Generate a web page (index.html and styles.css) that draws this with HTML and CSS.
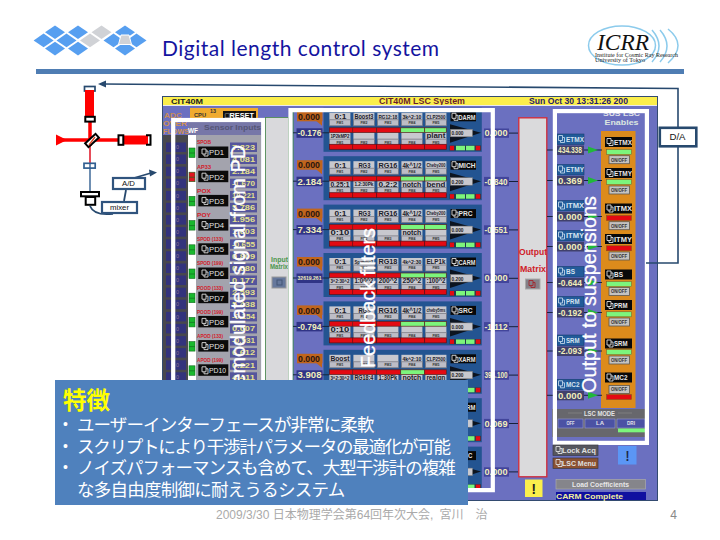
FILE: index.html
```
<!DOCTYPE html>
<html lang="ja">
<head>
<meta charset="utf-8">
<title>Digital length control system</title>
<link rel="stylesheet" href="styles.css">
</head>
<body>
<main class="slide">
  <header class="header">
    <svg class="emblem" viewBox="32 24 120 34" width="120" height="34" id="emblem"></svg>
    <h1 class="title">Digital length control system</h1>
    <svg class="icrr" viewBox="585 22 100 46" width="100" height="46">
      <g fill="none" stroke="#8ccbec" stroke-width="1.5">
        <ellipse cx="622" cy="45.500" rx="33.500" ry="19.5"/>
        <path d="M652 30q14 16 0 32M660 30q14 16 0 32M668 29q20 16 0 34"/>
      </g>
      <text class="icrr-name" x="597" y="50" textLength="52" lengthAdjust="spacingAndGlyphs">ICRR</text>
      <text class="icrr-sub" x="595" y="56.5" textLength="83" lengthAdjust="spacingAndGlyphs">Institute for Cosmic Ray Research</text>
      <text class="icrr-sub" x="595" y="62" textLength="50" lengthAdjust="spacingAndGlyphs">University of Tokyo</text>
    </svg>
  </header>
  <div class="rule"></div>
  <svg class="diagram" id="diagram" viewBox="0 76 720 428" width="720" height="428"></svg>
  <section class="features">
    <h2>特徴</h2>
    <ul>
      <li class="a">ユーザーインターフェースが非常に柔軟</li>
      <li class="b">スクリプトにより干渉計パラメータの最適化が可能</li>
      <li class="c">ノイズパフォーマンスも含めて、大型干渉計の複雑<br><span class="d">な多自由度制御に耐えうるシステム</span></li>
    </ul>
  </section>
  <footer class="footer"><span class="event">2009/3/30 日本物理学会第64回年次大会,&ensp;宮川　治</span><span class="page">4</span></footer>
</main>
<script src="diagram.js"></script>
</body>
</html>
```
FILE: styles.css
```
* { box-sizing: border-box; }
body { margin: 0; background: #fff; font-family: "Liberation Sans", "Noto Sans CJK JP", sans-serif; }
.slide { position: relative; width: 720px; height: 540px; overflow: hidden; display: flex; flex-direction: column; }
.header { height: 69px; padding: 22px 35px 0 32px; display: flex; align-items: flex-start; }
.emblem { margin-top: 2px; flex: none; }
.title { margin: 13px auto 0 10px; font: 400 21px/26px Lato, sans-serif; letter-spacing: .5px; color: #1414a0; white-space: nowrap; }
.icrr { flex: none; }
.icrr-name { font: italic 24px "Liberation Serif", serif; fill: #111; }
.icrr-sub { font: 6px "Liberation Serif", serif; fill: #222; }
.rule { height: 5px; margin: 0 36px 2px 36px; background: #4f7db3; flex: none; }
.diagram { display: block; flex: none; }
.diagram text { font-family: "Liberation Sans", sans-serif; }
.features { position: absolute; left: 55px; top: 380px; width: 413px; height: 125px; padding: 5px 8px; background: #4f81bd; color: #fff; }
.features h2 { margin: 0; font: 700 23.5px/28px "Noto Sans CJK JP", sans-serif; color: #ff0; }
.features ul { margin: 0; padding: 0; list-style: none; font: 400 17.5px/21.7px "Noto Sans CJK JP", sans-serif; white-space: nowrap; }
.features li { padding-left: 14px; }
.features li::before { content: "•"; float: left; width: 14px; margin-left: -14px; font: 14px/23px "Liberation Sans", sans-serif; }
.a { letter-spacing: -.9px; }
.b { letter-spacing: -1.25px; }
.c { letter-spacing: -1px; }
.d { letter-spacing: -.75px; }
.footer { display: flex; justify-content: space-between; padding: 1px 43px 0 216px; font-size: 12px; line-height: 20px; color: #aaa; white-space: nowrap; }
.page { color: #888; }
```
FILE: diagram.js
```
const out = [];
const rect = (x, y, w, h, fill, extra = "") => out.push(`<rect x="${x}" y="${y}" width="${w}" height="${h}" fill="${fill}" ${extra}/>`);
const path = (d, fill, stroke = "none", w = 1) => out.push(`<path d="${d}" fill="${fill}" stroke="${stroke}" stroke-width="${w}"/>`);
// Text centred on cy, starting at x, squeezed or stretched to the width w.
const text = (s, x, cy, w, size, fill, weight = 700) =>
  out.push(`<text x="${x}" y="${cy + size * 0.36}" font-size="${size}" font-weight="${weight}" fill="${fill}" textLength="${w}" lengthAdjust="spacingAndGlyphs">${s}</text>`);
const linkIcon = (x, cy, c = "#ddd") => path(`M${x} ${cy - 3}h4v5h-4zM${x + 2} ${cy + 2}v2h4v-5h-2`, "none", c, .9);
const frame = (x, y, w, h) => rect(x, y, w, h, "none", 'stroke="#fff" stroke-width="4.2"');
const vertical = (s, x, y, len) =>
  out.push(`<text transform="translate(${x} ${y}) rotate(-90)" font-size="20" fill="#fff" stroke="#fff" stroke-width=".3" textLength="${len}" lengthAdjust="spacingAndGlyphs">${s}</text>`);
const navy = "#27496e", lime = "#7cf57c", red = "#e30a12";

// Panel
rect(162.5, 96.5, 495, 404, "#6b70c0", 'stroke="#334b70"');
rect(163, 97, 494, 8, "#fbee4c");
text("CIT40M", 171, 101, 32, 8, "#222");
text("CIT40M LSC System", 379, 101, 86, 8.5, "#6b1d2c");
text("Sun Oct 30 13:31:26 200", 529, 101, 99, 8.5, "#26206a");
path("M163 105.5H657", "none", "#e8e8f0", 1);

// Sensor inputs
rect(163, 135, 25, 250, "#48484e");
rect(188, 135, 8, 250, "#fff");
rect(196, 135, 65, 250, "#a3a3ad");
rect(188, 122, 73, 13, "#7777a8");
rect(190, 108, 68, 10, "#f0ab30");
text("CPU", 194, 115, 12, 6, "#333");
text("13", 210, 111.5, 6, 5, "#333");
rect(223, 111, 33, 8, "#111");
text("□RESET", 225, 115.5, 29, 7, "#fff");
text("ADC", 164, 115, 18, 8, "#c98b58");
text("OVER", 163, 123.5, 24, 8, "#d09050");
text("FLOWS", 163, 131.5, 26, 8, "#d09050");
text("WF", 188, 130, 10, 7, "#fff");
text("Sensor Inputs", 204, 127.5, 57, 7.5, "#555575");
const pds = [["SPOB", "7.323", "4.081"], ["AP33", "2.184", "-1.670"], ["POX", "10.221", "5.786"], ["POY", "1.956", "1.603"],
  ["SPOD (133)", "-0.655", "0.809"], ["SPOD (199)", "0.080", "0.177"], ["POOD (133)", "2.593", "5.438"],
  ["POOD (199)", "-0.154", "0.007"], ["APOD (133)", "-0.931", "6.612"], ["APOD (199)", "0.221", "4.411"]];
pds.forEach(([label, a, b], i) => {
  const y = 152.5 + i * 24.2;
  text(label, 197, y - 10, label.length > 4 ? 26 : 14, 5, "#d31b2b");
  rect(198.3, y - 6, 30, 11.5, "#0b0b0b");
  linkIcon(202, y - .5);
  text("PD" + (i + 1), 209, y, i === 9 ? 17 : 15, 8, "#e4e4e4", 400);
  rect(189, y - 4.5, 6, 9.5, i === 1 ? "#e01520" : "#19b82e", 'stroke="#176b22" stroke-width=".6"');
  path(`M189 ${y + .5}h6`, "none", "#176b22", .7);
  [[a, -5.5], [b, 6.5]].forEach(([v, d]) => {
    rect(230, y + d - 4.5, 27, 9.5, "#55559c");
    text(v, 232, y + d, 23, 8, "#e4e08c");
    rect(166, y + d - 4.5, 20, 9.5, "#33337c");
    text("0", 176, y + d, 3, 6, "#8d7490", 400);
  });
});
frame(173.2, 120, 90, 285);

// Input matrix
rect(265.5, 117.5, 23, 268, "#d9d9dc", 'stroke="#4a8b4a" stroke-width=".8"');
text("Input", 271, 260, 17, 6.5, "#4c964c");
text("Matrix", 270, 267, 18, 6.5, "#4c964c");
rect(272, 277, 14, 11, "#66789c", 'stroke="#999"');
rect(277, 280, 5, 5, "none", 'stroke="#435475"');
path("M293 112V488", "none", "#389438", 1);

// Feedback filter banks
const banks = [
  ["DARM", "-0.176", "0.000", ["0:1", "Boost3", "RG12:18", "3k^2:10", "CLP2500"], ["1P2kMP2", "", "", "", "plant"]],
  ["MICH", "2.184", "-0.840", ["0:1", "RG3", "RG16", "4k^1/2", "Cheby200"], ["0.25:1", "1.2:30Pk", "0.2:2", "notch", "bend"]],
  ["PRC", "7.334", "-0.551", ["0:1", "RG3", "RG16", "4k^1/2", "Cheby200"], ["0:10", "", "", "notch", ""]],
  ["CARM", "32619.261", "0.000", ["0:1", "Sp:mov:1", "RG18", "4k^2:30", "ELP1k"], ["3^2:30^2", "1:00^2", "200^2", "250^2", ":100^2"]],
  ["SRC", "-0.794", "-1.112", ["0:1", "RG3", "RG16", "4k^1/2", "cheby5ms"], ["0:10", "", "", "", ""]],
  ["XARM", "3.908", "394.100", ["Boost", "", "", "4k^2:10", "CLP2500"], ["3^2:30^2", "RG18:4", "1:30Pk", "notch", "realgn"]],
  ["YARM", "", "0.069"],
  ["MC", "", "0.000"]];
banks.forEach(([name, inp, res, top, low], i) => {
  const y = 107.8 + i * 48.4;
  rect(323.5, y, 158.3, 44, "#235491");
  if (top) {
    rect(297, y + 4, 25.5, 9.5, "#c0651c");
    path(`M316 ${y + 13}h6v5z`, "#c0651c");
    text("0.000", 298, y + 9, 22, 9, "#2a1510");
    path(`M293 ${y + 25}h36`, "none", "#15253d", 1);
    rect(296.5, y + 20.5, 26, 9.5, "#303486");
    text(inp, 297.5, y + 25.3, 24, inp.length > 7 ? 6 : 9, "#f1eebc");
  }
  for (let k = 0; top && k < 5; k++) {
    const x = 329.4 + k * 24;
    [[top[k], 5, 4], [low[k], 24.3, 3.8]].forEach(([s, d, c]) => {
      rect(x, y + d, 21, 8, "#c8c8ce");
      if (s) text(s, x + (s.length < 4 ? 5 : 1), y + d + c, s.length < 4 ? 12 : 19, s.length > 6 ? 5 : 6.6, "#20202a");
      rect(x, y + d + 7, 21, 6, "#bdbdc6", 'stroke="#74747e" stroke-width=".7"');
      if (i < 5 || d < 20) text("FM" + (k + 1), x + 7, y + d + 10, 7, 4, "#333");
    });
    const on = k === 3 || (k === 4 && i !== 5);
    rect(x - (k ? .7 : 0), y + 20, k === 4 ? 21.6 : 24, 4.8, on ? lime : red, 'stroke="#5c2222" stroke-width=".7"');
    rect(x - (k ? .7 : 0), y + 36.5, k === 4 ? 21.6 : 24, 5, red, 'stroke="#5c1018" stroke-width=".7"');
  }
  path(`M450 ${y + 16.5}L481 ${y + 25}L450 ${y + 35}z`, "#0c1420");
  rect(450.5, y + 21.5, 22, 7.5, "#c8c8ce", 'stroke="#777" stroke-width=".5"');
  if (top) text(i % 2 ? "0.200" : "0.000", 451.5, y + 25.7, 12, 5, "#222");
  rect(450.5, y + 4.5, 25.5, 9, "#080808");
  linkIcon(452, y + 8.5);
  text(name, name === "MC" ? 463 : 458.5, y + 9, Math.min(17, name.length * 4.7), 7.5, "#e4e4e4");
  rect(449.5, y + 37.7, 31.5, 5, "#24384a");
  [[450, 4, red], [456, 9, lime], [466, 8.5, lime], [475.8, 4.5, red]].forEach(([x, w, c]) => rect(x, y + 38, w, 4.5, c));
  rect(484, y + 20.7, 25, 9.3, "#42459b");
  text(res, 484.5, y + 25.3, 23, 8.5, "#f1eebc");
  path(`M509 ${y + 25.3}h9`, "none", "#15203a", 1);
});
path("M290.5 110.2H492.8V490.2H290.5z", "none", "#fff", 4.2);

// Output matrix
rect(518.8, 117.8, 28, 359, "#dadadc", 'stroke="#cf3040" stroke-width="1.4"');
text("Output", 519, 252, 28, 8.5, "#cf2028");
text("Matrix", 520, 269, 26, 8.5, "#cf2028");
rect(525.5, 279, 14.5, 10, "#858088", 'stroke="#aaa"');
linkIcon(529, 283.5, "#a3262e");
rect(525, 479.5, 17.5, 17.5, "#fbef4c");
text("!", 531.5, 488.5, 4.5, 14, "#222");

// Suspension outputs
rect(601, 131, 34.5, 277, "#dc8b1c");
text("SUS LSC", 603, 113.5, 37, 8, "#e0e2e8");
text("Enables", 604.5, 122, 34, 8, "#dce6e0");
const sus = [["ETMX", "434.338", 150, 142, 152, 159.7, 1], ["ETMY", "0.369", 180.5, 173, 182, 190, 1], ["ITMX", "0.000", 216.5, 208.5, 218, 225.7, 0],
  ["ITMY", "0.000", 246.5, 239, 248.3, 256, 0], ["BS", "-0.644", 282.5, 274.5, 284, 291.5, 1], ["PRM", "-0.192", 312.5, 305, 314.3, 322, 1],
  ["SRM", "-2.093", 351, 343.5, 352.2, 360, 1], ["MC2", "0.000", 395.3, 377.5, 397, 389.5, 0]];
sus.forEach(([name, v, y, ly, by, ky, on]) => {
  path(`M547 ${y}H602`, "none", "#172440", 1);
  rect(557, y - 16, 27, 10.5, "#225b99", 'stroke="#173e70" stroke-width=".6"');
  linkIcon(558.5, y - 11.5, "#bcd4e8");
  text(name, 566, y - 11, name.length * 4.5, 7.5, "#d4e4f0");
  rect(557, y - 4.5, 27, 9.5, "#40406c");
  text(v, 558, y + .3, 24, 8.5, "#f0edba");
  path(`M588 ${y - 3.5}l10 3.5l-10 3.5z`, "#20b83a");
  rect(605, ly - 5, 27, 10, "#090909");
  linkIcon(607, ly - .5);
  text(name, 614, ly, name.length * 4.5, 8, "#e8e8e8");
  rect(606.5, by - 2.5, 25, 5, on ? lime : red, 'stroke="#765522" stroke-width=".5"');
  rect(609, ky - 4, 20.5, 8, "#c4c2c0", 'stroke="#5d5750" stroke-width=".8"');
  text("ON/OFF", 611, ky, 16, 5, "#333");
});
rect(552, 409, 97, 28, "#67676c");
path("M568 413h14M618 413h14", "none", "#888", .7);
text("LSC MODE", 584, 413, 31, 7, "#e4e4e4");
[[558, 25, "OFF"], [585, 30, "LA"], [617, 28, "DRI"]].forEach(([x, w, s]) => {
  rect(x, 419, w, 9, "#4b52a4", 'stroke="#8d91cc" stroke-width=".7"');
  text(s, x + w / 2 - 4, 423.5, 8, 5, "#e0e0e8");
});
rect(618, 428.5, 27, 3.8, lime);
frame(554.9, 111.1, 92, 331.8);
[[445, "#56565e", "Lock Acq"], [458, "#8a5132", "LSC Menu"]].forEach(([y, c, s]) => {
  rect(553, y, 45, 10.5, c, 'stroke="#3b3b46" stroke-width=".7"');
  linkIcon(556, y + 4.5);
  text(s, 562, y + 5.2, 34, 8, "#e0e0e0");
});
rect(618, 446, 18.5, 18.5, "#5b96f5");
text("!", 625.5, 455.5, 4, 14, "#1c2a4d");
rect(556, 479.5, 89.5, 9.5, "#85858b", 'stroke="#aaa" stroke-width=".7"');
text("Load Coefficients", 572, 484.2, 57, 7.5, "#e8e8e8");
rect(556, 492, 90, 8, "#1010a0");
text("CARM Complete", 556, 496.3, 67, 8, "#f0eda0");

vertical("Demodulated signal from PD", 245, 399, 254);
vertical("Feedback filters", 375, 368, 140);
vertical("Output to suspensions", 596, 393, 197);

// Interferometer
path("M90 121V146", "none", "#f00", 3.5);
path("M90 140V165", "none", "#e02030", 1.6);
path("M60 140H118", "none", "#f00", 3.3);
path("M56 134.5L67 140L56 145.5z", "#f00");
rect(84.5, 86.5, 10.5, 4.5, "#fff", `stroke="${navy}" stroke-width="1.7"`);
rect(85, 90, 9, 26, "#f00");
rect(85.3, 116.8, 9.5, 4.8, "#fff", 'stroke="#000" stroke-width="2"');
rect(124, 135.5, 24, 9, "#f00");
rect(118.5, 135.3, 4.8, 9.5, "#fff", 'stroke="#000" stroke-width="2"');
path("M146 135.3h4.5v9.5h-4.5", "none", "#000", 2);
rect(85, 138, 14, 5, "#fff", 'stroke="#000" stroke-width="2" transform="rotate(-42 92 140.5)"');
path("M89 145L95 137", "none", "#d42", 1.3);
rect(84, 163.3, 11.2, 4.8, "#fff", `stroke="#315f91" stroke-width="1.7"`);
path("M90 163V191", "none", "#315f91", 1.4);
rect(85.7, 197, 9.5, 7.8, "#fff", 'stroke="#000" stroke-width="2"');
rect(81, 192, 18, 4.3, "#fff", 'stroke="#000" stroke-width="2"');
path("M90 206Q94 216 113 213.8M124 201L126 190M134 178L151 173", "none", navy, 1.8);
path("M149 169.5L157 172.5L150 176.5z", navy);
rect(113, 178, 32, 11, "#fff", `stroke="#30547e" stroke-width="2.2"`);
text("A/D", 122, 183.3, 13, 7, "#111", 400);
rect(102, 202, 35, 11, "#fff", `stroke="#30547e" stroke-width="2.2"`);
text("mixer", 110, 207.5, 19, 7.5, "#111", 400);

// D/A loop
path("M103 84L678 88.5V263H646", "none", navy, 1.6);
path("M98 84L106 80.5V87.5z", navy);
rect(659.8, 127.8, 36.5, 18.5, "#fff", `stroke="${navy}" stroke-width="2.6"`);
text("D/A", 669.5, 136.8, 16, 8.5, "#111", 400);
document.getElementById("diagram").innerHTML = out.join("");

// Emblem tiles
const blue = "#579ff0", grey = "#d0d2d6";
const tiles = [[55, 32.3], [78, 32.3], [101.5, 32.3, 1], [125, 32.3], [43.6, 40.4], [66.5, 40.4], [90, 40.4, 1], [113.5, 40.4], [136.5, 40.4], [55, 48.6], [78, 48.6], [125, 48.6]];
document.getElementById("emblem").innerHTML = tiles.map(([x, y, g]) =>
  `<path fill="${g ? grey : blue}" d="M${x - 10} ${y}l10-6.8l10 6.8l-10 6.8z"/>`).join("")
  + `<path d="M121 35h8l2.5 9.500h-13z" fill="${grey}" stroke="#fff"/>`;
```
